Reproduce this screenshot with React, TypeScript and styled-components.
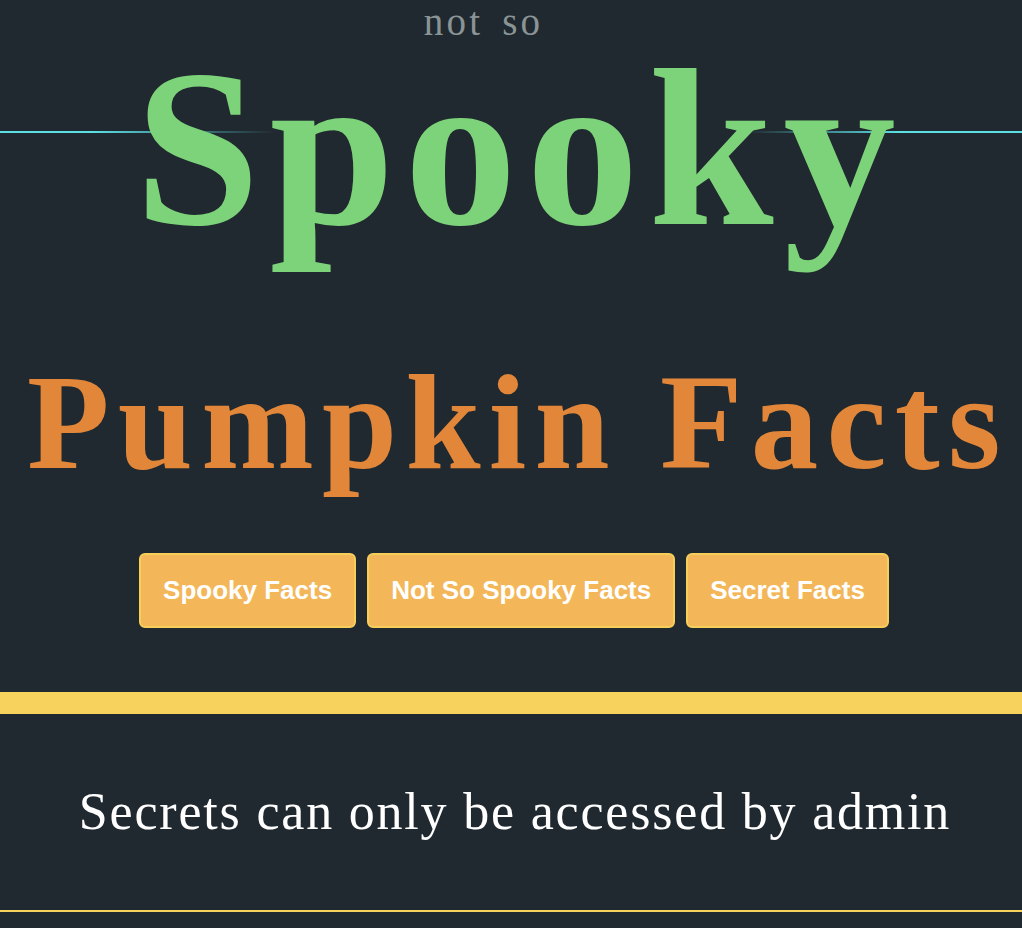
import React from "react";
import styled, { createGlobalStyle } from "styled-components";

const GlobalStyle = createGlobalStyle`
  html, body {
    margin: 0;
    padding: 0;
    background: #20292f;
  }
  body {
    font-family: "Liberation Serif", "Times New Roman", serif;
  }
`;

const Page = styled.div`
  min-height: 100vh;
  background: #20292f;
`;

const Header = styled.header`
  display: flex;
  flex-direction: column;
  align-items: stretch;
  padding-left: 6px;
  text-align: center;
`;

const NotSo = styled.p`
  margin: 0;
  padding-right: 61px;
  font-family: "Liberation Serif", "Times New Roman", serif;
  font-size: 39px;
  line-height: 44px;
  letter-spacing: 3.2px;
  word-spacing: 6px;
  color: #8a9496;
`;

const SpookyRow = styled.div`
  position: relative;

  &::before {
    content: "";
    position: absolute;
    left: -6px;
    right: 0;
    top: 87px;
    height: 2px;
    background: linear-gradient(
      to right,
      #5ddfe6 0%,
      #5ddfe6 9%,
      rgba(93, 223, 230, 0) 27%,
      rgba(93, 223, 230, 0) 73%,
      #5ddfe6 88%,
      #5ddfe6 100%
    );
    z-index: 0;
  }
`;

const Spooky = styled.h1`
  position: relative;
  z-index: 1;
  margin: 0;
  padding-left: 12px;
  font-family: "Liberation Serif", "Times New Roman", serif;
  font-weight: 700;
  font-size: 225px;
  line-height: 209px;
  letter-spacing: 9.6px;
  color: #7dd37a;
`;

const Pumpkin = styled.h2`
  margin: 92px 0 0;
  padding-left: 8px;
  font-family: "Liberation Serif", "Times New Roman", serif;
  font-weight: 700;
  font-size: 135px;
  line-height: 156px;
  letter-spacing: 8.3px;
  color: #e2873a;
`;

const Nav = styled.nav`
  display: flex;
  justify-content: center;
  gap: 11px;
  margin-top: 52px;
`;

const FactButton = styled.button`
  padding: 20px 22px;
  border: 2px solid #f6cf5b;
  border-radius: 6px;
  background: #f3b75a;
  color: #ffffff;
  font-family: "Liberation Sans", Arial, sans-serif;
  font-weight: 700;
  font-size: 26px;
  line-height: 31px;
  cursor: pointer;
`;

const SecretSection = styled.section`
  margin-top: 64px;
  border-top: 22px solid #f7d25c;
  border-bottom: 2px solid #f7d25c;
  padding: 70px 0 70px 6px;
  text-align: center;
`;

const SecretText = styled.p`
  margin: 0;
  padding-left: 2px;
  font-family: "Liberation Serif", "Times New Roman", serif;
  font-size: 52px;
  line-height: 56px;
  letter-spacing: 1.8px;
  color: #ffffff;
`;

export default function App() {
  return (
    <Page>
      <GlobalStyle />
      <Header>
        <NotSo>not so</NotSo>
        <SpookyRow>
          <Spooky>Spooky</Spooky>
        </SpookyRow>
        <Pumpkin>Pumpkin Facts</Pumpkin>
        <Nav>
          <FactButton>Spooky Facts</FactButton>
          <FactButton>Not So Spooky Facts</FactButton>
          <FactButton>Secret Facts</FactButton>
        </Nav>
      </Header>
      <SecretSection>
        <SecretText>Secrets can only be accessed by admin</SecretText>
      </SecretSection>
    </Page>
  );
}
